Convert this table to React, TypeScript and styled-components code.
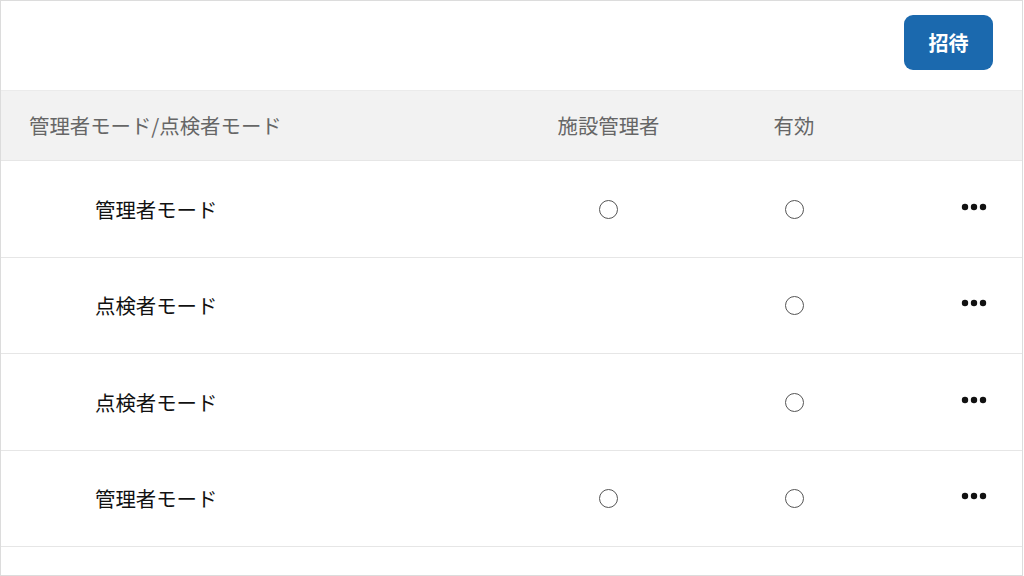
import React from "react";
import styled, { createGlobalStyle } from "styled-components";

const Global = createGlobalStyle`
  html, body { margin: 0; padding: 0; background: #fff; }
  body { font-family: "Noto Sans CJK JP", "Noto Sans", sans-serif; }
  * { box-sizing: border-box; }
`;

const Frame = styled.div`
  width: 1023px;
  height: 576px;
  border: 1px solid #dcdcdc;
  overflow: hidden;
  display: flex;
  flex-direction: column;
  background: #fff;
  & > * { flex: none; }
`;

const TopBar = styled.div`
  height: 89px;
  display: flex;
  justify-content: flex-end;
  align-items: flex-start;
  padding: 14px 29px 0 0;
`;

const InviteButton = styled.button`
  width: 89px;
  height: 55px;
  border: none;
  border-radius: 9px;
  background: #1b69ae;
  color: #fff;
  font-family: "Noto Sans CJK JP", sans-serif;
  font-weight: 700;
  font-size: 20px;
  display: flex;
  align-items: center;
  justify-content: center;
  padding: 0;
`;

const Cols = "529px 157px 214px 1fr";

const HeaderRow = styled.div`
  height: 71px;
  display: grid;
  grid-template-columns: ${Cols};
  align-items: center;
  background: #f2f2f2;
  border-top: 1px solid #ebebeb;
  border-bottom: 1px solid #e6e6e6;
  color: #666;
  font-size: 20.4px;
`;

const Row = styled.div<{ $h: number }>`
  height: ${(p) => p.$h}px;
  display: grid;
  grid-template-columns: ${Cols};
  align-items: center;
  border-bottom: 1px solid #e6e6e6;
  color: #111;
  font-size: 20.4px;
`;

const Cell = styled.div<{ $pad?: number; $center?: boolean; $end?: boolean }>`
  display: flex;
  align-items: center;
  justify-content: ${(p) => (p.$center ? "center" : p.$end ? "flex-end" : "flex-start")};
  padding-left: ${(p) => p.$pad ?? 0}px;
  padding-right: ${(p) => (p.$end ? 35 : 0)}px;
  line-height: 1;
  white-space: nowrap;
`;

const Circle = styled.span`
  width: 19px;
  height: 19px;
  border: 1.6px solid #555;
  border-radius: 50%;
  display: inline-block;
`;

const MoreButton = styled.span`
  display: inline-flex;
  margin-top: -5px;
`;

const Dots = () => (
  <MoreButton>
    <svg width="26" height="8" viewBox="0 0 26 8">
      <circle cx="4" cy="4" r="3.2" fill="#111" />
      <circle cx="13" cy="4" r="3.2" fill="#111" />
      <circle cx="22" cy="4" r="3.2" fill="#111" />
    </svg>
  </MoreButton>
);

const rows = [
  { name: "管理者モード", admin: true, active: true },
  { name: "点検者モード", admin: false, active: true },
  { name: "点検者モード", admin: false, active: true },
  { name: "管理者モード", admin: true, active: true },
];

const heights = [97, 96, 97, 96];

export default function App() {
  return (
    <>
      <Global />
      <Frame>
        <TopBar>
          <InviteButton>招待</InviteButton>
        </TopBar>
        <HeaderRow>
          <Cell $pad={28}>管理者モード/点検者モード</Cell>
          <Cell $center>施設管理者</Cell>
          <Cell $center>有効</Cell>
          <Cell />
        </HeaderRow>
        {rows.map((r, i) => (
          <Row key={i} $h={heights[i]}>
            <Cell $pad={94}>{r.name}</Cell>
            <Cell $center>{r.admin ? <Circle /> : null}</Cell>
            <Cell $center>{r.active ? <Circle /> : null}</Cell>
            <Cell $end>
              <Dots />
            </Cell>
          </Row>
        ))}
        <Row $h={60} />
      </Frame>
    </>
  );
}
